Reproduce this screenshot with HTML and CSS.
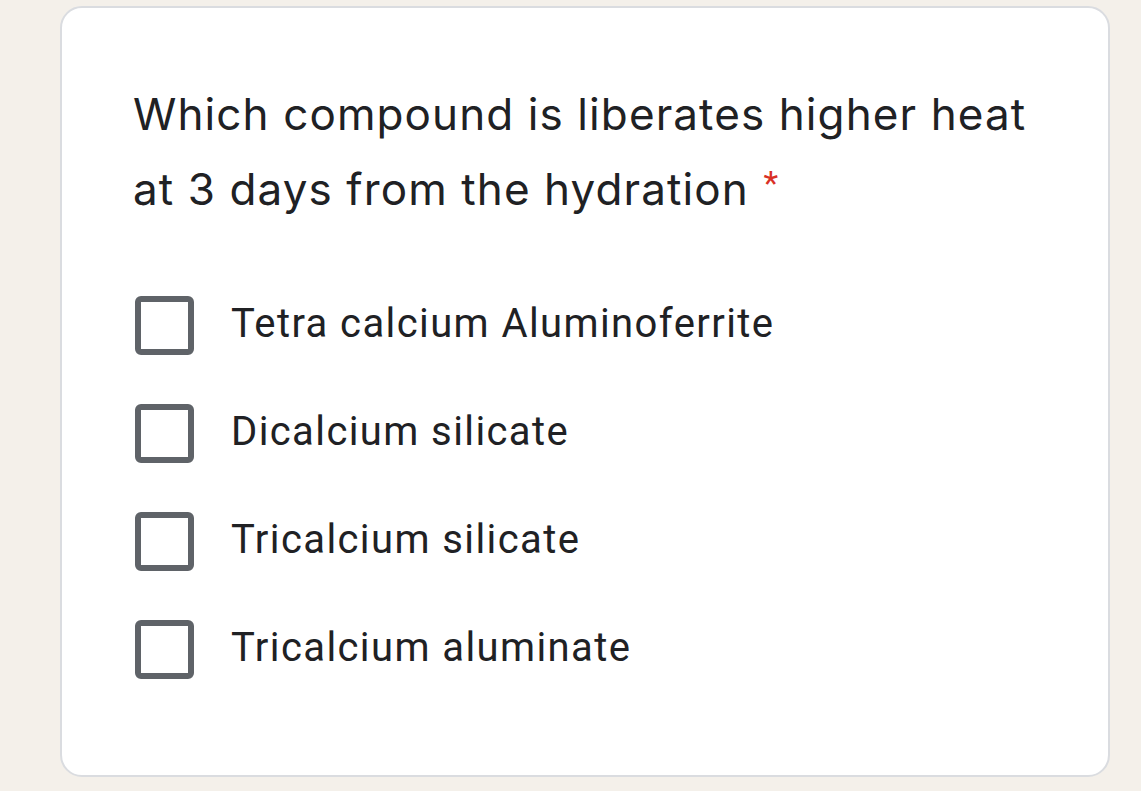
FILE: index.html
```html
<!DOCTYPE html>
<html lang="en">
<head>
<meta charset="utf-8">
<title>Question</title>
<link rel="stylesheet" href="styles.css">
</head>
<body>
<div class="card">
  <div class="title">Which compound is liberates higher heat at 3 days from the hydration <span class="req">*</span></div>
  <div class="options">
    <label class="option"><span class="box"></span><span class="label">Tetra calcium Aluminoferrite</span></label>
    <label class="option"><span class="box"></span><span class="label">Dicalcium silicate</span></label>
    <label class="option"><span class="box"></span><span class="label">Tricalcium silicate</span></label>
    <label class="option"><span class="box"></span><span class="label">Tricalcium aluminate</span></label>
  </div>
</div>
</body>
</html>
```
FILE: styles.css
```css
html, body {
  margin: 0;
  padding: 0;
}
body {
  background: #f4f0ea;
  padding: 6px 0 0 60px;
  font-family: Roboto, "Liberation Sans", sans-serif;
  color: #202124;
}
.card {
  box-sizing: border-box;
  width: 1050px;
  height: 771px;
  background: #ffffff;
  border: 2px solid #dadce0;
  border-radius: 22px;
  padding: 69px 40px 0 71px;
}
.title {
  font-family: Inter, Roboto, sans-serif;
  font-size: 44px;
  line-height: 75px;
  width: 905px;
  letter-spacing: 1.1px;
}
.req {
  color: #d93025;
  font-family: Roboto, sans-serif;
  font-size: 34px;
  line-height: 1;
  vertical-align: 10px;
  padding-left: 1px;
}
.options {
  margin-top: 69px;
  display: flex;
  flex-direction: column;
  gap: 49px;
}
.option {
  display: flex;
  align-items: center;
  height: 59px;
}
.box {
  box-sizing: border-box;
  width: 59px;
  height: 59px;
  border: 6px solid #5f6368;
  border-radius: 6px;
  flex: none;
  margin-left: 2px;
}
.label {
  margin-left: 37px;
  font-size: 40px;
  letter-spacing: 1.4px;
  margin-top: -5px;
}
```
